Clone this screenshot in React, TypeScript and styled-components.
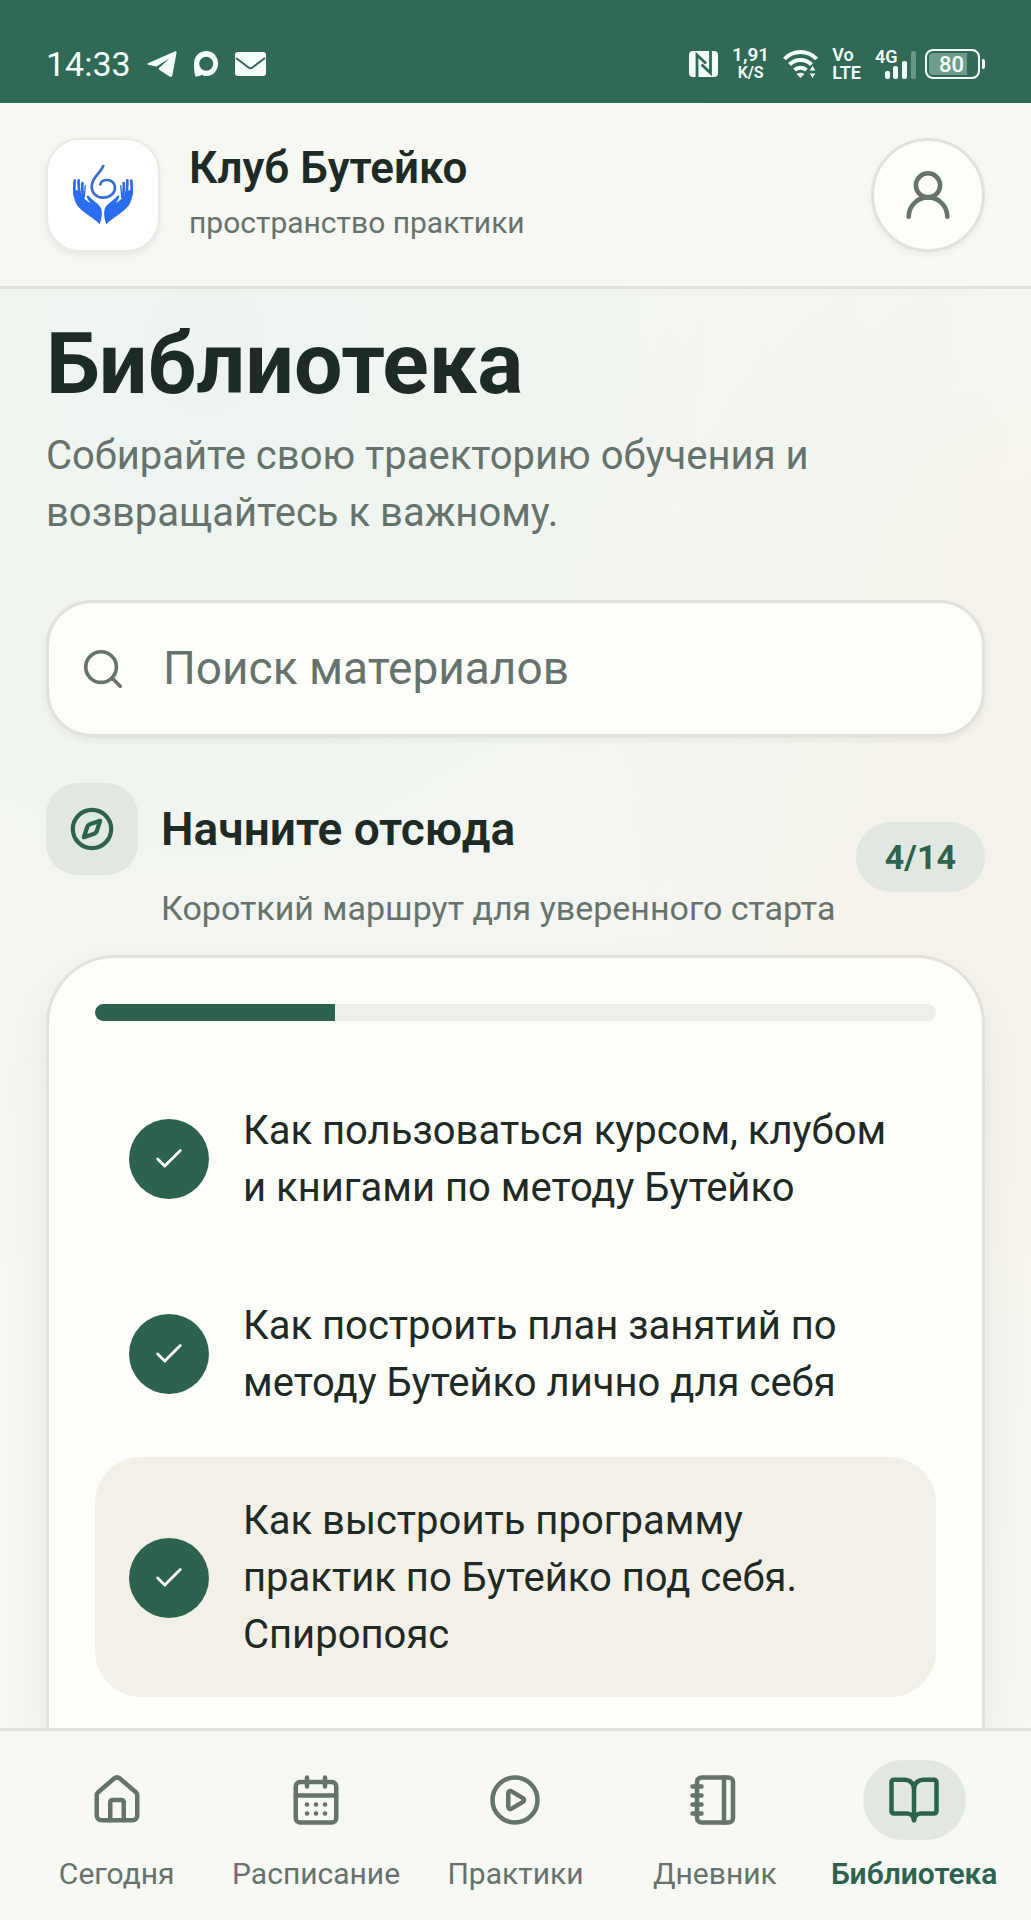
import React from "react";
import styled, { createGlobalStyle } from "styled-components";
import {
  BookOpen,
  CalendarDays,
  Check,
  CirclePlay,
  Compass,
  House,
  Notebook,
  Search,
  UserRound,
} from "lucide-react";

const color = {
  brand: "#2d634e",
  status: "#306a56",
  ink: "#1e2a25",
  muted: "#66736d",
  line: "#e2e1da",
  surface: "#fdfefa",
  bar: "#f8f8f4",
  tint: "#e1e7e1",
  sand: "#f3f0e8",
};

const gutter = "46px";

const GlobalStyle = createGlobalStyle`
  *, *::before, *::after { box-sizing: border-box; }
  body {
    margin: 0;
    background: #f6f6f1;
    color: ${color.ink};
    font-family: Roboto, "Noto Sans", sans-serif;
  }
  h1, h2, p, ul { margin: 0; padding: 0; }
  button { font: inherit; cursor: pointer; }
`;

const Screen = styled.div`
  display: flex;
  flex-direction: column;
  min-height: 100vh;
  background:
    radial-gradient(ellipse 80% 50% at 20% 18%, #edf4ef 0%, rgba(237, 244, 239, 0) 100%),
    radial-gradient(ellipse 50% 45% at 100% 45%, #f5f2e9 0%, rgba(245, 242, 233, 0) 100%),
    #f6f6f2;
`;

/* Status bar */

const StatusBar = styled.div`
  display: flex;
  justify-content: space-between;
  align-items: flex-end;
  height: 103px;
  padding: 0 ${gutter} 22px;
  background: ${color.status};
  color: #f4fffa;
`;

const StatusGroup = styled.div<{ $gap: number }>`
  display: flex;
  align-items: center;
  gap: ${(p) => p.$gap}px;
  height: 34px;
`;

const Clock = styled.time`
  font-size: 34px;
  line-height: 34px;
`;

const Stacked = styled.div`
  display: flex;
  flex-direction: column;
  font-size: 18px;
  font-weight: 600;
  line-height: 18px;
`;

const Speed = styled(Stacked)`
  align-items: center;
`;

const Rate = styled.span`
  font-size: 19px;
`;

const Unit = styled.span`
  font-size: 16px;
`;

const Signal = styled.div`
  position: relative;
  height: 30px;
  svg { display: block; }
`;

const Network = styled.span`
  position: absolute;
  top: 0;
  left: 0;
  font-size: 18px;
  font-weight: 600;
  line-height: 16px;
`;

const Battery = styled.div`
  display: flex;
  align-items: center;
  gap: 2px;
  &::after {
    content: "";
    width: 3px;
    height: 10px;
    border-radius: 0 2px 2px 0;
    background: currentColor;
  }
`;

const BatteryCase = styled.div`
  width: 55px;
  height: 30px;
  padding: 2px;
  border: 2px solid currentColor;
  border-radius: 8px;
`;

const BatteryLevel = styled.div`
  width: 80%;
  height: 100%;
  border-radius: 4px 0 0 4px;
  background: #6f9c8b;
  font-size: 22px;
  font-weight: 500;
  line-height: 23px;
  text-indent: 10px;
`;

/* Header */

const Header = styled.header`
  display: flex;
  align-items: center;
  gap: 29px;
  padding: 35px ${gutter} 34px;
  border-bottom: 3px solid ${color.line};
  background: linear-gradient(90deg, #f6f8f2, #f9f8f4);
`;

const LogoTile = styled.a`
  display: grid;
  place-items: center;
  flex: none;
  width: 114px;
  height: 114px;
  border: 2px solid #ebeae5;
  border-radius: 34px;
  background: #ffffff;
  box-shadow: 0 3px 6px rgba(40, 50, 40, 0.08);
`;

const Brand = styled.div`
  flex: 1;
  min-width: 0;
  padding-bottom: 4px;
`;

const BrandName = styled.p`
  font-size: 44px;
  font-weight: 600;
  line-height: 57px;
`;

const BrandNote = styled.p`
  padding-top: 3px;
  color: ${color.muted};
  font-size: 30px;
  line-height: 46px;
`;

const ProfileButton = styled.button`
  display: grid;
  place-items: center;
  flex: none;
  width: 114px;
  height: 114px;
  padding: 0;
  border: 3px solid ${color.line};
  border-radius: 50%;
  background: ${color.surface};
  color: ${color.muted};
  box-shadow: 0 3px 6px rgba(40, 50, 40, 0.06);
`;

/* Page body */

const Main = styled.main`
  display: flex;
  flex-direction: column;
  flex: 1;
  padding: 23px ${gutter} 0;
`;

const Title = styled.h1`
  font-size: 86px;
  font-weight: 700;
  line-height: 103px;
`;

const Lead = styled.p`
  padding-top: 12px;
  color: ${color.muted};
  font-size: 40px;
  line-height: 57px;
`;

const SearchBox = styled.label`
  display: flex;
  align-items: center;
  gap: 37px;
  height: 137px;
  margin: 59px 0 46px;
  padding: 0 31px;
  border: 3px solid ${color.line};
  border-radius: 46px;
  background: ${color.surface};
  color: ${color.muted};
  box-shadow: 0 3px 6px rgba(40, 50, 40, 0.07);
  svg { flex: none; }
`;

const SearchInput = styled.input`
  flex: 1;
  min-width: 0;
  padding: 0;
  border: 0;
  outline: 0;
  background: transparent;
  color: ${color.ink};
  font: 400 46px/57px Roboto, "Noto Sans", sans-serif;
  &::placeholder { color: ${color.muted}; opacity: 1; }
`;

const SectionHead = styled.div`
  display: flex;
  align-items: center;
  justify-content: space-between;
  gap: 12px;
  padding-bottom: 24px;
`;

const SectionTitles = styled.div`
  display: grid;
  grid-template-columns: 92px 1fr;
  column-gap: 23px;
  align-items: center;
`;

const SectionIcon = styled.span`
  display: grid;
  place-items: center;
  height: 92px;
  border-radius: 32px;
  background: ${color.tint};
  color: ${color.brand};
`;

const SectionTitle = styled.h2`
  font-size: 46px;
  font-weight: 600;
  line-height: 57px;
`;

const SectionNote = styled.p`
  grid-column: 2;
  padding-top: 10px;
  color: ${color.muted};
  font-size: 34px;
  line-height: 46px;
`;

const Counter = styled.span`
  flex: none;
  padding: 0 29px;
  border-radius: 35px;
  background: ${color.tint};
  color: ${color.brand};
  font-size: 34px;
  font-weight: 700;
  line-height: 70px;
`;

const Card = styled.section`
  flex: 1;
  padding: 46px 46px 31px;
  border: 3px solid ${color.line};
  border-bottom: 0;
  border-radius: 69px 69px 0 0;
  background: ${color.surface};
  box-shadow: 0 24px 48px rgba(60, 70, 50, 0.07);
`;

const Track = styled.div`
  height: 17px;
  overflow: hidden;
  border-radius: 9px;
  background: #f0eeea;
`;

const Fill = styled.div`
  height: 100%;
  background: ${color.brand};
`;

const Lessons = styled.ul`
  display: flex;
  flex-direction: column;
  gap: 12px;
  padding-top: 46px;
  list-style: none;
`;

const Lesson = styled.button<{ $current: boolean }>`
  display: flex;
  align-items: center;
  gap: 34px;
  width: 100%;
  padding: 35px 34px 34px;
  border: 0;
  border-radius: 46px;
  background: ${(p) => (p.$current ? color.sand : "transparent")};
  color: ${color.ink};
  font-size: 40px;
  line-height: 57px;
  text-align: left;
`;

const Done = styled.span`
  display: grid;
  place-items: center;
  flex: none;
  width: 80px;
  height: 80px;
  border-radius: 50%;
  background: ${color.brand};
  color: #ffffff;
`;

/* Bottom navigation */

const TabBar = styled.nav`
  position: sticky;
  bottom: 0;
  display: grid;
  grid-template-columns: repeat(5, 1fr);
  height: 192px;
  padding: 29px 17px 0;
  border-top: 3px solid ${color.line};
  background: ${color.bar};
`;

const Tab = styled.a<{ $active: boolean }>`
  display: flex;
  flex-direction: column;
  align-items: center;
  gap: 14px;
  color: ${(p) => (p.$active ? color.brand : color.muted)};
  font-size: 30px;
  font-weight: ${(p) => (p.$active ? 600 : 400)};
  line-height: 40px;
  text-decoration: none;
`;

const TabIcon = styled.span<{ $active: boolean }>`
  display: grid;
  place-items: center;
  width: 103px;
  height: 80px;
  border-radius: 40px;
  background: ${(p) => (p.$active ? color.tint : "transparent")};
`;

const TelegramIcon = () => (
  <svg width="30" height="26" viewBox="0 0 30 26" fill="currentColor" aria-hidden="true">
    <path d="M1 12.2 27.6.5c1.4-.6 2.2 0 1.9 1.6l-4.1 22c-.3 1.8-1.4 2.3-2.9 1.4L12.6 19c-1-.7-1-1.4-.2-2.2L22.6 7.2 9.5 15.6 1.4 13.7c-1.3-.3-1.4-1-.4-1.5z" />
  </svg>
);

const ChatIcon = () => (
  <svg width="26" height="26" viewBox="0 0 26 26" aria-hidden="true">
    <path
      fill="currentColor"
      fillRule="evenodd"
      d="M13.5 0C20 0 25 5.3 25 12.5S20 25 13.5 25c-2 0-3.4-.4-4.7-1.2C7.5 25 5.5 25.5 3 25.5c-.8 0-1.1-.7-.8-1.3C1 21 1 17 1 12.5 1 5 6.5 0 13.5 0zm-.3 5.800a7 7 0 1 0 0 14 7 7 0 0 0 0-14z"
    />
  </svg>
);

const MailIcon = () => (
  <svg width="31" height="24" viewBox="0 0 31 24" aria-hidden="true">
    <rect width="31" height="24" rx="3" fill="currentColor" />
    <path d="M1 6l12.5 9.5a3.5 3.5 0 0 0 4 0L30 6" fill="none" stroke={color.status} strokeWidth="2" />
  </svg>
);

const NfcIcon = () => (
  <svg width="29" height="26" viewBox="0 0 29 26" aria-hidden="true">
    <rect width="29" height="26" rx="4" fill="currentColor" />
    <path
      d="M8 26V4l9 8.5M21.5 0v22l-9-8.5"
      fill="none"
      stroke={color.status}
      strokeWidth="2.8"
    />
  </svg>
);

const WifiIcon = () => (
  <svg width="35" height="28" viewBox="0 0 35 28" fill="none" stroke="currentColor" strokeWidth="4" aria-hidden="true">
    <path d="M1.5 9a22 22 0 0 1 32 0M6.5 14.5a15.5 15.5 0 0 1 22 0M11.5 20a8.8 8.8 0 0 1 12 0" />
    <path d="M13.5 24q4-2.5 8 0l-4 4z" fill="currentColor" stroke="none" />
    <path d="M29.5 15l3.5 6h-7zM29.5 29l3.5-6h-7z" fill="currentColor" stroke={color.status} strokeWidth="1" />
  </svg>
);

const SignalBars = () => (
  <svg width="42" height="30" viewBox="0 0 42 30" fill="currentColor" aria-hidden="true">
    <rect x="10" y="22" width="5" height="8" rx="2" />
    <rect x="18" y="17" width="5" height="13" rx="2" />
    <rect x="27" y="12" width="5" height="18" rx="2" />
    <rect x="36" y="2" width="5" height="28" rx="2" opacity="0.3" />
  </svg>
);

const Hand = () => (
  <g>
    <path
      d="M1 76C2 110 10 124 34 142c20 15 36 24 46 36 6-16 9-34 4-48-5-13-24-22-36-36-5-5-9-2-6 4l9 16C38 106 26 96 16 76z"
      fill="#2b6df0"
    />
    <path
      d="M5 47q-2 20 0 44M17 46q-1 22 4 44M28 54q-1 18 2 44"
      fill="none"
      stroke="#2b6bea"
      strokeWidth="8"
      strokeLinecap="round"
    />
    <path d="M37 62q-2 16-3 34" fill="none" stroke="#2b6bea" strokeWidth="4" strokeLinecap="round" />
  </g>
);

const Logo = () => (
  <svg width="60" height="60" viewBox="0 0 180 180" aria-hidden="true">
    <Hand />
    <g transform="matrix(-1 0 0 1 180 0)">
      <Hand />
    </g>
    <path
      d="M91 1C86 22 56 36 56 64c0 21 15 34 34 34 20 0 36-13 36-30 0-14-11-23-24-23-10 0-18 5-20 13"
      fill="none"
      stroke="#3a6cd0"
      strokeWidth="8"
      strokeLinecap="round"
    />
  </svg>
);

const lessons = [
  { title: "Как пользоваться курсом, клубом и книгами по методу Бутейко", current: false },
  { title: "Как построить план занятий по методу Бутейко лично для себя", current: false },
  { title: "Как выстроить программу практик по Бутейко под себя. Спиропояс", current: true },
];

const tabs = [
  { label: "Сегодня", icon: House },
  { label: "Расписание", icon: CalendarDays },
  { label: "Практики", icon: CirclePlay },
  { label: "Дневник", icon: Notebook },
  { label: "Библиотека", icon: BookOpen },
];

const done = 4;
const total = 14;

export default function App() {
  return (
    <>
      <GlobalStyle />
      <Screen>
        <StatusBar>
          <StatusGroup $gap={16}>
            <Clock>14:33</Clock>
            <TelegramIcon />
            <ChatIcon />
            <MailIcon />
          </StatusGroup>
          <StatusGroup $gap={14}>
            <NfcIcon />
            <Speed>
              <Rate>1,91</Rate>
              <Unit>K/S</Unit>
            </Speed>
            <WifiIcon />
            <Stacked>
              <span>Vo</span>
              <span>LTE</span>
            </Stacked>
            <StatusGroup $gap={8}>
              <Signal>
                <Network>4G</Network>
                <SignalBars />
              </Signal>
              <Battery>
                <BatteryCase>
                  <BatteryLevel>80</BatteryLevel>
                </BatteryCase>
              </Battery>
            </StatusGroup>
          </StatusGroup>
        </StatusBar>

        <Header>
          <LogoTile href="#home" aria-label="Клуб Бутейко">
            <Logo />
          </LogoTile>
          <Brand>
            <BrandName>Клуб Бутейко</BrandName>
            <BrandNote>пространство практики</BrandNote>
          </Brand>
          <ProfileButton type="button" aria-label="Профиль">
            <UserRound size={58} strokeWidth={1.9} />
          </ProfileButton>
        </Header>

        <Main>
          <Title>Библиотека</Title>
          <Lead>Собирайте свою траекторию обучения и возвращайтесь к важному.</Lead>

          <SearchBox>
            <Search size={46} strokeWidth={1.9} aria-hidden="true" />
            <SearchInput type="search" placeholder="Поиск материалов" aria-label="Поиск материалов" />
          </SearchBox>

          <SectionHead>
            <SectionTitles>
              <SectionIcon>
                <Compass size={46} strokeWidth={2.2} />
              </SectionIcon>
              <SectionTitle>Начните отсюда</SectionTitle>
              <SectionNote>Короткий маршрут для уверенного старта</SectionNote>
            </SectionTitles>
            <Counter>
              {done}/{total}
            </Counter>
          </SectionHead>

          <Card>
            <Track role="progressbar" aria-label="Пройдено" aria-valuenow={done} aria-valuemin={0} aria-valuemax={total}>
              <Fill style={{ width: `${(done / total) * 100}%` }} />
            </Track>
            <Lessons>
              {lessons.map((lesson) => (
                <li key={lesson.title}>
                  <Lesson type="button" $current={lesson.current}>
                    <Done>
                      <Check size={34} strokeWidth={2} />
                    </Done>
                    <span>{lesson.title}</span>
                  </Lesson>
                </li>
              ))}
            </Lessons>
          </Card>
        </Main>

        <TabBar>
          {tabs.map(({ label, icon: Icon }) => {
            const active = label === "Библиотека";
            return (
              <Tab key={label} href="#" $active={active} aria-current={active ? "page" : undefined}>
                <TabIcon $active={active}>
                  <Icon size={54} strokeWidth={2} />
                </TabIcon>
                {label}
              </Tab>
            );
          })}
        </TabBar>
      </Screen>
    </>
  );
}
